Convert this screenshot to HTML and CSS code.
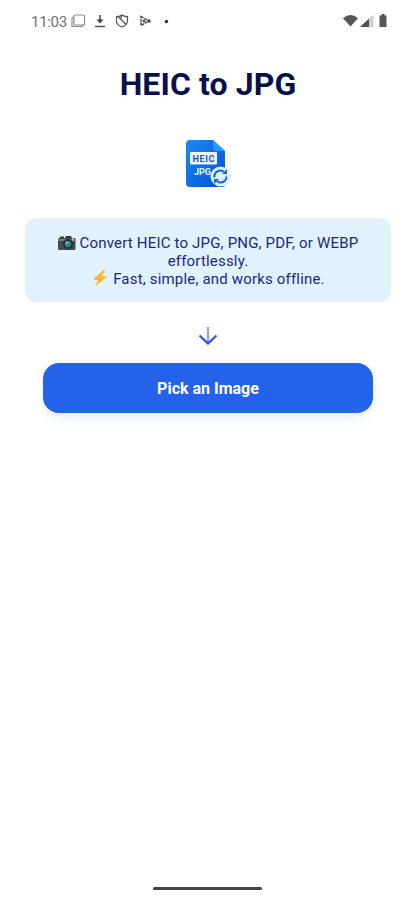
FILE: index.html
```html
<!DOCTYPE html>
<html lang="en">
<head>
<meta charset="utf-8">
<title>HEIC to JPG</title>
<link rel="stylesheet" href="styles.css">
</head>
<body>
<header class="status">
  <span class="time">11:03</span>
  <svg class="notifications" width="104" height="20" viewBox="0 0 104 20" fill="none" stroke="#555">
    <g stroke="#8c8c8c" stroke-width="1.2"><rect x="5" y="4" width="10.500" height="10" rx="1.500"/><path d="M4 6l-1 1v8.500h10l2-1.500"/></g>
    <path d="M31 4v7.500M26 15.500h10" stroke-width="1.700"/><path d="M27.500 8.500h7L31 12.500z" fill="#444" stroke="none"/>
    <path d="M53 4q3 2 5.500 1.500V10q0 4-5.500 6-5.500-2-5.500-6V5.500Q50 6 53 4zM49 5.500l8 8M53 4l-1.500 4.500" stroke-width="1.200"/>
    <path d="M72 5.500l8 4.500-8 4.500z" stroke-width="1.500" stroke-dasharray="3 .7"/><circle cx="75" cy="10" r="1.500" fill="#555" stroke="none"/><circle cx="80" cy="10" r="1.700" fill="#444" stroke="none"/>
    <circle cx="97.500" cy="10.500" r="1.700" fill="#333" stroke="none"/>
  </svg>
  <svg class="system" width="46" height="20" viewBox="0 0 46 20">
    <path d="M1 7.200Q8.500.800 16 7.200L8.500 15.500z" fill="#555"/>
    <path d="M31.500 3.500v12.500H18z" fill="#cfcfcf"/><path d="M27 7.500V16h-9z" fill="#555"/>
    <path d="M37.500 4.500h2V3h3v1.500h2V16h-7z" fill="#555"/>
  </svg>
</header>
<main>
  <h1>HEIC to JPG</h1>
  <svg class="logo" width="50" height="50" viewBox="0 0 50 50">
    <defs><linearGradient id="paper" x1="0" y1="0" x2="1" y2="1"><stop stop-color="#168df3"/><stop offset="1" stop-color="#064fd5"/></linearGradient></defs>
    <path d="M7 1h23l12 11v33q0 3-3 3H7q-4 0-4-4V5q0-4 4-4z" fill="url(#paper)"/>
    <path d="M30 1l12 11h-9q-3 0-3-3z" fill="#239bf8"/>
    <rect x="7" y="13" width="27" height="12.500" rx="1" fill="#edf6ff"/>
    <text class="logo-heic" x="9.500" y="22.500" textLength="22">HEIC</text>
    <text class="logo-jpg" x="11" y="35.500" textLength="17">JPG</text>
    <circle cx="37.500" cy="37.500" r="10" fill="#dceeff"/>
    <g fill="none" stroke="#1763cf" stroke-width="2"><path d="M31.500 38.500a6 6 0 0 1 9.500-5.800"/><path d="M43.500 36.500a6 6 0 0 1-9.500 5.800"/></g>
    <path d="M39 35h5v-5zM36 40h-5v5z" fill="#1763cf"/>
    <path d="M43 36h6.500L45 41z" fill="#d5eaff"/>
  </svg>
  <section class="card">
    <p><svg class="camera" width="18" height="16" viewBox="0 0 18 16"><rect y="3" width="17.500" height="12" rx="1.200" fill="#454b4d"/><path d="M2 1.500h4V3H2zM7 3l1-2h5l1 2z" fill="#34393c"/><path d="M0 4h17.500v2H0z" fill="#737a7b"/><circle cx="10" cy="9" r="5" fill="#202c31"/><circle cx="10" cy="9" r="3.300" fill="#397d8c"/><circle cx="9" cy="8" r="1.300" fill="#79c1c9"/><path d="M14 3.500h2v2h-2z" fill="#d7c7a4"/></svg> Convert HEIC to JPG, PNG, PDF, or WEBP effortlessly.</p>
    <p><svg class="bolt" width="18" height="17" viewBox="0 0 18 17"><path d="M12.500 0L2 9.500l5.500 1L3.500 17 16 6.800l-5.500-1L14.500 0z" fill="#fdb827"/></svg> Fast, simple, and works offline.</p>
  </section>
  <svg class="arrow" width="20" height="20" viewBox="0 0 20 20" fill="none"><path d="M10 1v16" stroke="#91a6ef" stroke-width="2.400"/><path d="M1.500 9.500l8.500 8 8.500-8" stroke="#2855dc" stroke-width="2.200"/></svg>
  <button class="pick" type="button">Pick an Image</button>
</main>
<div class="home"></div>
</body>
</html>
```
FILE: styles.css
```css
* { box-sizing: border-box; }
body {
  margin: 0;
  height: 900px;
  display: flex;
  flex-direction: column;
  background: #fff;
  font-family: Roboto, sans-serif;
}
.status {
  height: 43px;
  padding: 11px 27px 0 31px;
  display: flex;
  align-items: flex-start;
}
.time {
  width: 38px;
  font-size: 15px;
  line-height: 22px;
  letter-spacing: -.3px;
  color: #707070;
}
.system { margin-left: auto; }
main {
  display: flex;
  flex-direction: column;
  align-items: center;
  padding: 0 24px 0 25px;
}
h1 {
  margin: 21px 0 0;
  font-size: 32px;
  line-height: 40px;
  font-weight: 700;
  letter-spacing: .1px;
  color: #08104d;
}
.logo { margin-top: 35px; }
.logo-heic, .logo-jpg {
  font-size: 9px;
  font-weight: 700;
  fill: #1c55a8;
}
.logo-jpg { fill: #e9f5ff; }
.card {
  width: 366px;
  height: 84px;
  margin-top: 29px;
  padding: 16px;
  border-radius: 12px;
  background: #e0f2fe;
  color: #1e277f;
  font-size: 15px;
  line-height: 18px;
  letter-spacing: .18px;
  text-align: center;
}
.card p { margin: 0; }
.camera, .bolt { vertical-align: -3px; }
.arrow { margin-top: 24px; }
.pick {
  width: 330px;
  height: 50px;
  margin-top: 17px;
  padding: 2px 0 0;
  border: 0;
  border-radius: 16px;
  background: #2362e9;
  box-shadow: 0 4px 10px rgba(37, 99, 235, .12);
  color: #fff;
  font: 700 16px/48px Roboto, sans-serif;
}
.home {
  width: 109px;
  height: 3px;
  margin: auto auto 10px 153px;
  border-radius: 2px;
  background: #444;
}
```
